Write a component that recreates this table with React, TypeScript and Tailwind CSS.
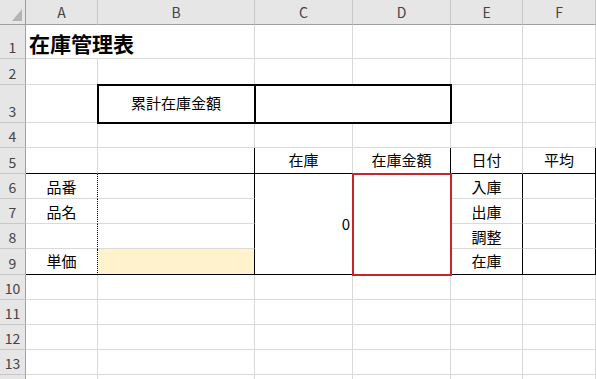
import React from 'react';

// border colour pieces, written out so Tailwind picks them up
const GR = 'border-r-[#d9d9d9]';
const GB = 'border-b-[#d9d9d9]';
const KR = 'border-r-black';
const KB = 'border-b-black';

type CellProps = {
  r?: string;
  b?: string;
  className?: string;
  children?: React.ReactNode;
};

const Cell: React.FC<CellProps> = ({ r = GR, b = GB, className = '', children }) => (
  <div className={`flex min-w-0 items-center border-r border-b ${r} ${b} ${className}`}>{children}</div>
);

const ColHead: React.FC<{ label: string }> = ({ label }) => (
  <div className="flex items-center justify-center border-r border-b border-r-[#c8c8c8] border-b-[#9f9f9f] bg-[#e6e6e6] text-[14px] text-[#444]">
    {label}
  </div>
);

const RowHead: React.FC<{ n?: number }> = ({ n }) => (
  <div className="flex items-end justify-center pb-[1px] border-r border-b border-r-[#9f9f9f] border-b-[#c8c8c8] bg-[#e6e6e6] text-[14px] leading-[20px] text-[#444]">
    {n}
  </div>
);

const Center: React.FC<{ children: React.ReactNode }> = ({ children }) => (
  <span className="w-full text-center">{children}</span>
);

const EmptyRow: React.FC<{ n?: number }> = ({ n }) => (
  <>
    <RowHead n={n} />
    <Cell />
    <Cell />
    <Cell />
    <Cell />
    <Cell />
    <Cell />
  </>
);

export default function App() {
  return (
    <div className="h-[379px] w-[596px] overflow-hidden bg-white font-['Noto_Sans_CJK_JP',sans-serif] text-[15px] text-black">
      <div className="grid grid-cols-[26px_72px_157px_98px_98px_72px_73px] grid-rows-[25px_34px_26px_38px_25px_26px_25px_25px_25px_26px_25px_25px_25px_25px_25px]">
        {/* column headers */}
        <div className="relative border-r border-b border-r-[#9f9f9f] border-b-[#9f9f9f] bg-[#e6e6e6]">
          <svg className="absolute left-0 top-0" width="25" height="24" viewBox="0 0 25 24">
            <polygon points="12,21 22,9 22,21" fill="#b4b4b4" />
          </svg>
        </div>
        <ColHead label="A" />
        <ColHead label="B" />
        <ColHead label="C" />
        <ColHead label="D" />
        <ColHead label="E" />
        <ColHead label="F" />

        {/* 1 */}
        <RowHead n={1} />
        <Cell className="col-span-2 pl-[3px] pt-[3px]">
          <span className="text-[21px] font-bold leading-none">在庫管理表</span>
        </Cell>
        <Cell />
        <Cell />
        <Cell />
        <Cell />

        {/* 2 */}
        <EmptyRow n={2} />

        {/* 3 */}
        <RowHead n={3} />
        <Cell />
        <Cell className="relative z-10 outline-2 -outline-offset-1 outline-black">
          <Center>累計在庫金額</Center>
        </Cell>
        <Cell className="relative z-10 col-span-2 outline-2 -outline-offset-1 outline-black" />
        <Cell />
        <Cell />

        {/* 4 */}
        <EmptyRow n={4} />

        {/* 5 */}
        <RowHead n={5} />
        <Cell b={KB} />
        <Cell r={KR} b={KB} />
        <Cell b={KB}>
          <Center>在庫</Center>
        </Cell>
        <Cell r={KR} b={KB}>
          <Center>在庫金額</Center>
        </Cell>
        <Cell b={KB}>
          <Center>日付</Center>
        </Cell>
        <Cell r={KR} b={KB}>
          <Center>平均</Center>
        </Cell>

        {/* 6 */}
        <RowHead n={6} />
        <Cell r={KR} className="[border-right-style:dotted] pt-[2px]">
          <Center>品番</Center>
        </Cell>
        <Cell r={KR} />
        <Cell b={KB} className="row-span-4 justify-end pr-[2px]">
          0
        </Cell>
        <Cell
          r={KR}
          b={KB}
          className="relative z-10 row-span-4 outline-2 -outline-offset-1 outline-[#c4262c]"
        />
        <Cell r={KR} className="pt-[2px]">
          <Center>入庫</Center>
        </Cell>
        <Cell r={KR} />

        {/* 7 */}
        <RowHead n={7} />
        <Cell r={KR} className="[border-right-style:dotted] pt-[2px]">
          <Center>品名</Center>
        </Cell>
        <Cell r={KR} />
        <Cell r={KR} className="pt-[2px]">
          <Center>出庫</Center>
        </Cell>
        <Cell r={KR} />

        {/* 8 */}
        <RowHead n={8} />
        <Cell r={KR} className="[border-right-style:dotted]" />
        <Cell r={KR} />
        <Cell r={KR} className="pt-[2px]">
          <Center>調整</Center>
        </Cell>
        <Cell r={KR} />

        {/* 9 */}
        <RowHead n={9} />
        <Cell r={KR} b={KB} className="[border-right-style:dotted]">
          <Center>単価</Center>
        </Cell>
        <Cell r={KR} b={KB} className="bg-[#fff2cc]" />
        <Cell r={KR} b={KB}>
          <Center>在庫</Center>
        </Cell>
        <Cell r={KR} b={KB} />

        <EmptyRow n={10} />
        <EmptyRow n={11} />
        <EmptyRow n={12} />
        <EmptyRow n={13} />
        {/* row 14 only peeks in at the bottom edge */}
        <EmptyRow />
      </div>
    </div>
  );
}
